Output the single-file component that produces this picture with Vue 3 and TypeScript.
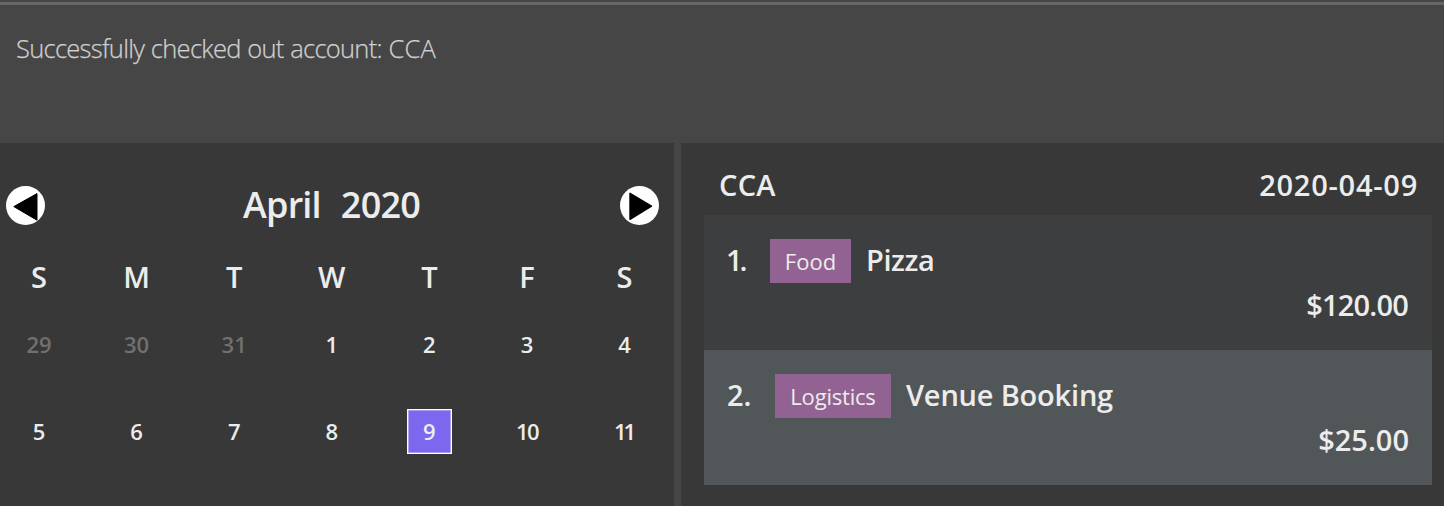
<script setup lang="ts">
interface Day {
  label: number
  outside?: boolean
  selected?: boolean
}
interface Expense {
  index: number
  tag: string
  name: string
  amount: string
}

const weekdays: string[] = ['S', 'M', 'T', 'W', 'T', 'F', 'S']
const days: Day[] = [
  { label: 29, outside: true },
  { label: 30, outside: true },
  { label: 31, outside: true },
  { label: 1 },
  { label: 2 },
  { label: 3 },
  { label: 4 },
  { label: 5 },
  { label: 6 },
  { label: 7 },
  { label: 8 },
  { label: 9, selected: true },
  { label: 10 },
  { label: 11 },
]
const expenses: Expense[] = [
  { index: 1, tag: 'Food', name: 'Pizza', amount: '$120.00' },
  { index: 2, tag: 'Logistics', name: 'Venue Booking', amount: '$25.00' },
]
</script>

<template>
  <div class="window">
    <div class="status"><span class="message">Successfully checked out account: <span class="checked-out">CCA</span></span></div>
    <div class="panels">
      <section class="calendar">
        <header class="month-bar">
          <button class="nav" aria-label="Previous month">
            <svg width="39" height="39" viewBox="0 0 39 39">
              <circle cx="19.5" cy="19.5" r="19.5" fill="#fff" />
              <path d="M7.8 20.6 L31 7.6 V34.2 Z" fill="#000" stroke="#000" stroke-linejoin="round" />
            </svg>
          </button>
          <h1 class="month"><span>April</span><span class="year">2020</span></h1>
          <button class="nav" aria-label="Next month">
            <svg width="39" height="39" viewBox="0 0 39 39">
              <circle cx="19.5" cy="19.5" r="19.5" fill="#fff" />
              <path d="M31.5 20.2 L10 7.3 V33.3 Z" fill="#000" stroke="#000" stroke-width="1.4" stroke-linejoin="round" />
            </svg>
          </button>
        </header>
        <div class="week heads">
          <span v-for="(d, i) in weekdays" :key="i" class="cell">{{ d }}</span>
        </div>
        <div class="week days">
          <span
            v-for="d in days"
            :key="d.label"
            class="cell"
            :class="{ outside: d.outside, selected: d.selected, tight: d.label === 10, tighter: d.label === 11 }"
          >{{ d.label }}</span>
        </div>
      </section>
      <section class="account">
        <header class="account-bar">
          <span class="account-name">CCA</span>
          <span class="date">2020-04-09</span>
        </header>
        <article v-for="e in expenses" :key="e.index" class="expense" :class="e.tag.toLowerCase()">
          <div class="line">
            <span class="index">{{ e.index }}.</span>
            <span class="tag">{{ e.tag }}</span>
            <span class="name">{{ e.name }}</span>
          </div>
          <div class="amount">{{ e.amount }}</div>
        </article>
      </section>
    </div>
  </div>
</template>

<style>
body {
  margin: 0;
  background: #383838;
}
</style>

<style scoped>
.window {
  width: 1444px;
  height: 506px;
  overflow: hidden;
  display: flex;
  flex-direction: column;
  box-sizing: border-box;
  padding-top: 2px;
  background: #464646;
  color: #ececec;
  font-family: 'Open Sans', 'Noto Sans', sans-serif;
  font-weight: 600;
}
.status {
  box-sizing: border-box;
  height: 141px;
  border-top: 3px solid #666;
  padding: 23px 16px 0;
}
.message {
  display: block;
  font-size: 25.5px;
  line-height: 40px;
  font-weight: 300;
  letter-spacing: -0.72px;
  word-spacing: 0.7px;
  color: #d0d0d0;
  -webkit-text-stroke: 0.25px #d0d0d0;
  white-space: nowrap;
}
.checked-out {
  letter-spacing: 0.2px;
}
.panels {
  flex: 1;
  display: flex;
  gap: 7px;
}
.calendar {
  width: 674px;
  background: #383838;
}
.month-bar {
  display: flex;
  align-items: center;
  justify-content: space-between;
  padding: 43px 15px 0 6px;
}
.nav {
  width: 39px;
  height: 39px;
  padding: 0;
  border: 0;
  background: none;
}
.nav svg {
  display: block;
}
.month {
  display: flex;
  gap: 20px;
  margin: 0;
  padding: 0 2px 2px 0;
  font-size: 36px;
  line-height: 36px;
  font-weight: 600;
  letter-spacing: -0.8px;
}
.week {
  display: grid;
  grid-template-columns: repeat(7, 45px);
  column-gap: 52.6px;
  padding-left: 16.5px;
}
.cell {
  box-sizing: border-box;
  display: flex;
  align-items: center;
  justify-content: center;
  padding-bottom: 2px;
}
.heads {
  margin-top: 30px;
  height: 44px;
  font-size: 29px;
}
.days {
  margin-top: 23px;
  grid-auto-rows: 45px;
  row-gap: 42px;
  font-size: 22px;
}
.tight {
  letter-spacing: -1.6px;
}
.tighter {
  padding-right: 2px;
  letter-spacing: -3px;
}
.outside {
  color: #707070;
}
.selected {
  background: #7b68ee;
  border: 1px solid #fff;
  box-shadow: inset 0 0 0 0.6px #d5cffa;
}
.account {
  flex: 1;
  box-sizing: border-box;
  padding: 14px 12px 0 23px;
  background: #383838;
  font-size: 29px;
}
.account-bar {
  display: flex;
  justify-content: space-between;
  height: 58px;
  padding: 0 14px 0 15px;
  line-height: 56px;
}
.account-name {
  letter-spacing: 0.3px;
}
.date {
  letter-spacing: 0.75px;
}
.expense {
  box-sizing: border-box;
  height: 135px;
  padding: 24px 23px 0;
  background: #3c3e3f;
}
.expense:last-child {
  background: #515658;
}
.line {
  display: flex;
  height: 44px;
  line-height: 42px;
}
.index {
  width: 43px;
}
.food .index {
  text-indent: -1px;
  letter-spacing: -3px;
}
.logistics .index {
  width: 48px;
}
.tag {
  box-sizing: border-box;
  width: 81px;
  background: #926392;
  font-size: 22px;
  font-weight: 400;
  line-height: 45px;
  text-align: center;
}
.logistics .tag {
  width: 116px;
  letter-spacing: -0.2px;
}
.name {
  margin-left: 15px;
  letter-spacing: -0.4px;
  white-space: nowrap;
}
.logistics .name {
  letter-spacing: -0.2px;
}
.amount {
  line-height: 44px;
  text-align: right;
}
.food .amount {
  margin-right: 1px;
  letter-spacing: -0.8px;
}
</style>
